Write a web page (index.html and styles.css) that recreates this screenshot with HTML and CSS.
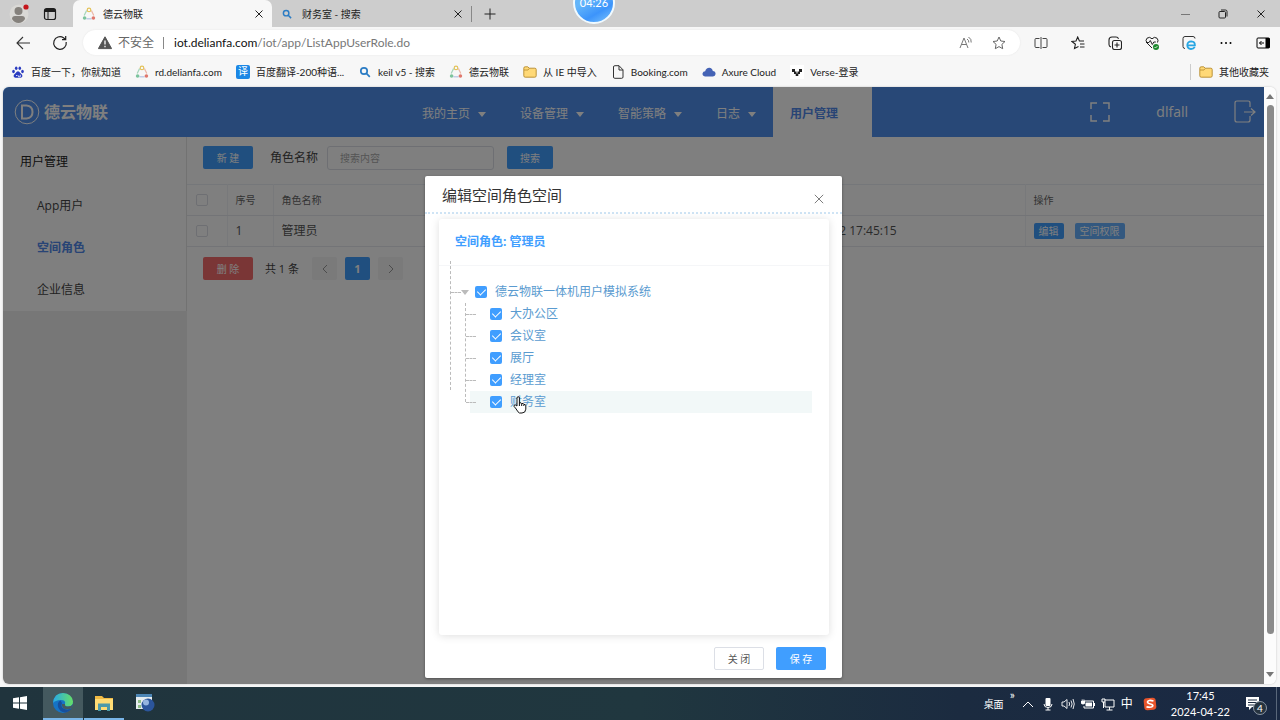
FILE: index.html
```html
<!DOCTYPE html>
<html lang="zh-CN">
<head>
<meta charset="utf-8">
<title>德云物联</title>
<link rel="stylesheet" href="styles.css">
</head>
<body>
<svg class="defs" aria-hidden="true">
  <symbol id="ring" viewBox="0 0 14 14"><g fill="none" stroke-width="1.2"><path d="M4.600 3.600 2.200 8.400" stroke="#a3d4b8"/><path d="M9.400 3.600l2.400 4.800" stroke="#ecb5a6"/><path d="M4.400 11.800h5.200" stroke="#b4c3e3"/><circle cx="7" cy="2.900" r="1.800" stroke="#e3c35c"/></g><circle cx="2.600" cy="11" r="1.800" fill="#7cc49d"/><circle cx="11.400" cy="11" r="1.800" fill="#e0776c"/></symbol>
  <symbol id="search" viewBox="0 0 14 14"><g fill="none" stroke="#2b7cc4" stroke-width="1.7"><circle cx="6" cy="6" r="3.2"/><path d="m8.4 8.4 3.4 3.4"/></g></symbol>
  <symbol id="folder" viewBox="0 0 14 14"><path d="M.8 3.2q0-1.400 1.400-1.400h2.600l1.400 1.400h5.600q1.400 0 1.400 1.300v6.300q0 1.400-1.400 1.400H2.200q-1.400 0-1.400-1.400z" fill="#ffd977" stroke="#b58a2c" stroke-width=".9"/><path d="M1 5h4l1.300-1.600" fill="none" stroke="#b58a2c" stroke-width=".8"/></symbol>
  <symbol id="close" viewBox="0 0 10 10"><path d="m1.500 1.500 7 7m0-7-7 7" fill="none" stroke="currentColor"/></symbol>
</svg>

<header class="browser">
  <div class="tabstrip">
    <button class="profile" aria-label="个人资料"><svg width="20" height="20" viewBox="0 0 20 20"><circle cx="10" cy="10" r="9.500" fill="#d9d8d5"/><circle cx="9.500" cy="7" r="4" fill="#85817c"/><path d="M3 15q0-3 3-3h7q3 0 3 3-2.500 4-6.500 4T3 15z" fill="#85817c"/><circle cx="17" cy="3" r="2.600" fill="#c5161d"/></svg></button>
    <button class="spaces" aria-label="工作区"><svg width="14" height="14" viewBox="0 0 14 14"><rect x="1.500" y="1.500" width="11" height="11" rx="2" fill="none" stroke="#1c1c1c" stroke-width="1.200"/><path d="M2 2h10v3H2z" fill="#1c1c1c"/><path d="M5 5v7" stroke="#1c1c1c"/></svg></button>
    <div class="tab active"><svg width="14" height="14"><use href="#ring"/></svg><span>德云物联</span><button aria-label="关闭标签页"><svg width="10" height="10"><use href="#close"/></svg></button></div>
    <div class="tab"><svg width="12" height="12"><use href="#search"/></svg><span>财务室 - 搜索</span><button aria-label="关闭标签页"><svg width="10" height="10"><use href="#close"/></svg></button></div>
    <button class="newtab" aria-label="新建标签页"><svg width="12" height="12" viewBox="0 0 12 12"><path d="M6 .5v11M.5 6h11" stroke="#222"/></svg></button>
    <div class="wincontrols">
      <button aria-label="最小化"><svg width="10" height="10" viewBox="0 0 10 10"><path d="M1 5.500h9" stroke="#777"/></svg></button>
      <button aria-label="还原"><svg width="10" height="10" viewBox="0 0 10 10"><g fill="none" stroke="#222"><rect x="1" y="2.500" width="6.500" height="6.500" rx="1"/><path d="M3 1h4.500Q9 1 9 2.500v5"/></g></svg></button>
      <button aria-label="关闭"><svg width="10" height="10"><use href="#close"/></svg></button>
    </div>
    <div class="timer">04:26</div>
  </div>

  <div class="toolbar">
    <button class="navbtn" aria-label="后退"><svg width="16" height="14" viewBox="0 0 16 14"><path d="M8 1 2 7l6 6M2 7h13" fill="none" stroke="#333" stroke-width="1.100"/></svg></button>
    <button class="navbtn" aria-label="刷新"><svg width="16" height="16" viewBox="0 0 16 16"><path d="M14.200 7A6.300 6.300 0 1 1 11.500 2.800L13.500 4.500M13.700 1v3.700h-3.700" fill="none" stroke="#222" stroke-width="1.200"/></svg></button>
    <div class="address">
      <svg width="14" height="14" viewBox="0 0 14 14"><path d="M7 .8 13.600 12.600H.4z" fill="#555" stroke="#555" stroke-linejoin="round"/><path d="M7 4.500v4M7 9.800v1.400" stroke="#fff" stroke-width="1.300"/></svg>
      <span class="insecure">不安全</span><i></i>
      <span class="url"><b>iot.delianfa.com</b>/iot/app/ListAppUserRole.do</span>
      <button aria-label="朗读"><svg width="14" height="14" viewBox="0 0 14 14"><g fill="none" stroke="#777"><path d="m1 12 4-10 4 10M2.500 8.500h5M8 3q2 1 1.800 3.500M9.500 1q3.200 2 2.700 5.500"/></g></svg></button>
      <button aria-label="收藏"><svg width="14" height="14" viewBox="0 0 14 14"><path d="m7 1 1.800 4 4.200.5-3.100 2.900.8 4.300L7 10.600l-3.700 2.100.8-4.300L1 5.500 5.200 5z" fill="none" stroke="#666"/></svg></button>
    </div>
    <div class="tools">
      <button aria-label="拆分屏幕"><svg width="14" height="14" viewBox="0 0 14 14"><g fill="none" stroke="#444"><path d="M5.500 2.500H2q-1 0-1 1v7q0 1 1 1h3.500M8.500 2.500H12q1 0 1 1v7q0 1-1 1H8.500M7 1v12"/></g></svg></button>
      <button aria-label="收藏夹"><svg width="14" height="14" viewBox="0 0 14 14"><path d="m7.500 10.500-4 2 .9-4.200L1 5.500 5 5l1.700-4 1.700 4H13M9 8h4.500M9 11h4.500" fill="none" stroke="#222" stroke-width="1.100"/></svg></button>
      <button aria-label="集锦"><svg width="14" height="14" viewBox="0 0 14 14"><g fill="none" stroke="#222" stroke-width="1.100"><rect x="4.500" y="4.500" width="9" height="9" rx="2"/><path d="M9 6.500v5M6.500 9h5M3 11Q1 10.500 1 8.500V4q0-3 3-3h4q2 0 2.500 1.800"/></g></svg></button>
      <button aria-label="浏览器健康"><svg width="14" height="14" viewBox="0 0 14 14"><path d="M7 12 2 7Q0 4.200 2 2.200 4.700.2 7 2.800 9.300.2 12 2.200q1.800 2 .5 4.300M1 6.500h3l1.300-2 2 4L8.800 6h2" fill="none" stroke="#222"/><circle cx="11" cy="11" r="3" fill="#1d8a2e"/><path d="m9.500 11 1 1 2-2" fill="none" stroke="#fff" stroke-width=".8"/></svg></button>
      <button aria-label="IE 模式"><svg width="14" height="14" viewBox="0 0 14 14"><path d="M3 12.500Q1 12.500 1 10.500v-8q0-2 2-2h8q2 0 2 2" fill="none" stroke="#333"/><path d="M12.800 11q-1.300 2-3.800 2-3.700-.3-3.700-4 .3-3.700 4-3.700 3.700.2 3.600 4H5.800" fill="none" stroke="#27a6e3" stroke-width="1.800"/></svg></button>
      <button aria-label="更多"><svg width="14" height="14" viewBox="0 0 14 14"><circle cx="2.500" cy="7" r="1"/><circle cx="7" cy="7" r="1"/><circle cx="11.500" cy="7" r="1"/></svg></button>
      <button aria-label="侧边栏"><svg width="14" height="14" viewBox="0 0 14 14"><rect x="1" y="2" width="12.500" height="10" rx="1" fill="none" stroke="#000"/><path d="M9.500 2h4v10h-4z"/><path d="M8 7H3.500m2-2-2 2 2 2" fill="none" stroke="#000"/></svg></button>
    </div>
  </div>

  <nav class="bookmarks">
    <a href="#"><svg width="14" height="14" viewBox="0 0 14 14" fill="#2b3cc0"><ellipse cx="2.500" cy="6.500" rx="1.300" ry="1.700"/><ellipse cx="5.200" cy="3.300" rx="1.300" ry="1.800"/><ellipse cx="8.800" cy="3.300" rx="1.300" ry="1.800"/><ellipse cx="11.500" cy="6.500" rx="1.300" ry="1.700"/><path d="M7 6.200q1.300 0 2.300 1.700l1.800 1.900q.9 2.500-1.300 2.900H4.200q-2.200-.4-1.300-2.900l1.800-1.900Q5.700 6.200 7 6.200z"/><path d="M5 10.500h1.500m1 0v1.300h1.800v-2" fill="none" stroke="#fff" stroke-width=".8"/></svg>百度一下，你就知道</a>
    <a href="#"><svg width="14" height="14"><use href="#ring"/></svg>rd.delianfa.com</a>
    <a href="#"><span class="yi">译</span>百度翻译-200种语...</a>
    <a href="#"><svg width="14" height="14"><use href="#search"/></svg>keil v5 - 搜索</a>
    <a href="#"><svg width="14" height="14"><use href="#ring"/></svg>德云物联</a>
    <a href="#"><svg width="14" height="14"><use href="#folder"/></svg>从 IE 中导入</a>
    <a href="#"><svg width="14" height="14" viewBox="0 0 14 14"><path d="M2.500 2q0-1.300 1.300-1.300H8L12 4.800V12q0 1.300-1.300 1.300H3.800Q2.500 13.300 2.500 12zM8 .8V5h4" fill="none" stroke="#333"/></svg>Booking.com</a>
    <a href="#"><svg width="14" height="14" viewBox="0 0 14 14"><path d="M3 11.500Q.3 11 .5 8.600 1 6.300 3.200 6.300 4 2.800 7.300 2.800q3 .3 3.500 3.200 2.700.3 2.800 2.900-.3 2.300-2.600 2.600z" fill="#4563b5"/></svg>Axure Cloud</a>
    <a href="#"><svg width="14" height="14" viewBox="0 0 14 14"><path d="M0 0h14v14H0z" fill="#fff"/><path d="M2 4h3v3H2zM9 4h3v3H9zM4 6.500h2.500V9H4zM7.500 6.500H10V9H7.500zM5.700 8.500h2.600V11H5.700z" fill="#222"/></svg>Verse-登录</a>
    <a class="others" href="#"><svg width="14" height="14"><use href="#folder"/></svg>其他收藏夹</a>
  </nav>
</header>

<div class="viewport">
  <div class="page">
    <header class="sitehead">
      <a class="brand" href="#"><svg width="26" height="26" viewBox="0 0 26 26" fill="none" stroke="#fff"><circle cx="13" cy="13" r="11.800"/><path d="M8 6.500h4.500q6 .5 6 6.500t-6 6.500H8z" stroke-width="2"/></svg><span>德云物联</span></a>
      <nav class="mainnav">
        <a href="#">我的主页<i></i></a><a href="#">设备管理<i></i></a><a href="#">智能策略<i></i></a><a href="#">日志<i></i></a><a class="current" href="#">用户管理</a>
      </nav>
      <div class="account">
        <button aria-label="全屏"><svg width="20" height="20" viewBox="0 0 20 20"><path d="M1 7V1h6m6 0h6v6m0 6v6h-6m-6 0H1v-6" fill="none" stroke="#fff" stroke-width="1.500"/></svg></button>
        <span>dlfall</span>
        <button aria-label="退出"><svg width="22" height="24" viewBox="0 0 22 24"><path d="M16 7V3q0-2-2-2H3Q1 1 1 3v17q0 2 2 2h11q2 0 2-2v-4M10 12h11m-4-3.500 4 3.500-4 3.500" fill="none" stroke="#fff" stroke-width="1.200"/></svg></button>
      </div>
    </header>

    <div class="content">
      <aside class="side">
        <nav>
          <h2>用户管理</h2>
          <a href="#">App用户</a><a class="current" href="#">空间角色</a><a href="#">企业信息</a>
        </nav>
      </aside>
      <main>
        <form class="filter">
          <button type="button" class="btn primary">新 建</button>
          <label for="role">角色名称</label>
          <input id="role" type="text" placeholder="搜索内容">
          <button type="button" class="btn primary find">搜索</button>
        </form>
        <table>
          <colgroup><col class="c-check"><col class="c-no"><col class="c-name"><col class="c-time"><col class="c-act"></colgroup>
          <thead><tr><th><input type="checkbox" aria-label="全选"></th><th>序号</th><th>角色名称</th><th></th><th>操作</th></tr></thead>
          <tbody><tr><td><input type="checkbox" aria-label="选择管理员"></td><td>1</td><td>管理员</td><td>2024-04-22 17:45:15</td><td><button class="mini">编辑</button><button class="mini light">空间权限</button></td></tr></tbody>
        </table>
        <div class="pager">
          <button class="btn danger">删 除</button>
          <span>共 1 条</span>
          <button class="pg" aria-label="上一页"><svg width="8" height="10" viewBox="0 0 8 10"><path d="M6 1 2 5l4 4" fill="none" stroke="#999"/></svg></button>
          <button class="pg on">1</button>
          <button class="pg" aria-label="下一页"><svg width="8" height="10" viewBox="0 0 8 10"><path d="m2 1 4 4-4 4" fill="none" stroke="#999"/></svg></button>
        </div>
      </main>
    </div>

    <div class="mask">
      <section class="dialog" role="dialog" aria-labelledby="dlg">
        <header><h1 id="dlg">编辑空间角色空间</h1><button aria-label="关闭"><svg width="12" height="12" viewBox="0 0 10 10"><path d="m1.500 1.500 7 7m0-7-7 7" fill="none" stroke="currentColor" stroke-width=".8"/></svg></button></header>
        <div class="card">
          <h3>空间角色: 管理员</h3>
          <div class="tree">
            <div class="node root"><i class="arrow"></i><label><input type="checkbox" checked>德云物联一体机用户模拟系统</label></div>
            <ul>
              <li class="node"><label><input type="checkbox" checked>大办公区</label></li>
              <li class="node"><label><input type="checkbox" checked>会议室</label></li>
              <li class="node"><label><input type="checkbox" checked>展厅</label></li>
              <li class="node"><label><input type="checkbox" checked>经理室</label></li>
              <li class="node hover"><label><input type="checkbox" checked>财务室</label>
                <svg class="cursor" width="14" height="18" viewBox="0 0 14 18"><path d="M4 10V2q0-1.300 1.200-1.300T6.400 2v5q2-.8 2.300.6 1.900-.7 2.100.8 1.900-.2 2 1.300v3.500q-.3 3.800-3.800 3.800H6.500Q5 16.500 3.200 13L1 10.300Q.8 8.500 2.500 9z" fill="#fff" stroke="#111"/><path d="M6.400 7v3M8.700 7.600V10M10.800 8.600V10" stroke="#111"/></svg>
              </li>
            </ul>
          </div>
        </div>
        <footer><button class="btn plain">关 闭</button><button class="btn save">保 存</button></footer>
      </section>
    </div>
  </div>
  <div class="scroll"><i class="up"></i><b></b><i class="down"></i></div>
</div>

<footer class="taskbar">
  <button aria-label="开始"><svg width="16" height="16" viewBox="0 0 16 16"><path d="M1 3.300 7 2.300V7.600H1zM8 2.200 15 1v6.600H8zM1 8.500h6v5.300l-6-1zM8 8.500h7V15l-7-1.200z" fill="#fff"/></svg></button>
  <button class="open focus" aria-label="Microsoft Edge"><svg width="22" height="22" viewBox="0 0 22 22"><defs><linearGradient id="eg" x1="0" x2="1"><stop offset="0" stop-color="#28a9e8"/><stop offset="1" stop-color="#66df66"/></linearGradient></defs><circle cx="11" cy="11" r="10" fill="#1673c5"/><path d="M1 11Q2 1 11 1q9 .5 10 8.500 0 5-5 5-4 0-3-2.500 1-4-4-4-6 .3-8 3z" fill="url(#eg)"/><path d="M8.500 8.500Q5 10 6 15q2 5 7 5.500 4-.5 6.500-4-4 2-7 .5-4.500-2-2.500-6z" fill="#174f9c"/><path d="M13 12q-.5 2.500 3 2.600 3.500 0 4.900-2.600-.3 3-1.500 4.300-3.400 1.700-6.400.7-3.500-1.500-3-5z" fill="#44595f"/></svg></button>
  <button class="open" aria-label="文件资源管理器"><svg width="20" height="18" viewBox="0 0 20 18"><path d="M1 2h7l2 2h9v12H1z" fill="#f1bb45"/><path d="M1 5h18v11H1z" fill="#ffdc75"/><path d="M4 17V9.500h12V17h-3v-4H7v4z" fill="#4d9aaa"/></svg></button>
  <button aria-label="管理程序"><svg width="20" height="20" viewBox="0 0 20 20"><path d="M1 1h16v15H1z" fill="#e6edf0"/><path d="M1 1h16v3H1z" fill="#4d86b5"/><path d="M3 7h3v3H3zm0 5h3v3H3z" fill="#8fbf88"/><circle cx="13" cy="12" r="6.500" fill="#2b559b"/><circle cx="11" cy="9.500" r="3" fill="#94b4df"/></svg></button>
  <div class="tray">
    <span class="desk">桌面</span><span class="more">»</span>
    <svg width="14" height="14" viewBox="0 0 14 14"><path d="m2 10 5-5 5 5" fill="none" stroke="#fff"/></svg>
    <svg width="14" height="14" viewBox="0 0 14 14"><rect x="4.500" y="1" width="5" height="8" rx="1" fill="#fff"/><path d="M3 7q0 3.500 4 3.500T11 7M7 10v3M4.500 13h5" fill="none" stroke="#fff"/></svg>
    <svg width="14" height="14" viewBox="0 0 14 14"><path d="M1 5h2l3-2.500v9L3 9H1zM8 5q1.200 2 0 4M10 3.500q2.200 3.500 0 7M12 2q2.500 5 0 10" fill="none" stroke="#fff" stroke-width=".9"/></svg>
    <svg width="14" height="14" viewBox="0 0 14 14"><path d="M3 5.500V4h9.500v7H3V9" fill="none" stroke="#fff"/><path d="M4.500 5.500H11v4H4.500zM13 6h1v3h-1zM0 4h4v2.500q-2 2-4 0zM.7 2.500h1V4h-1zM2.400 2.500h1V4h-1z" fill="#fff"/></svg>
    <svg width="14" height="14" viewBox="0 0 14 14"><path d="M3.500 3H13v7H4V5M8.500 10v3M5.500 13h6M1 2h3v3H1zM2.500 5v6" fill="none" stroke="#fff"/></svg>
    <span class="ime">中</span>
    <svg class="sogou" width="14" height="14" viewBox="0 0 14 14"><rect x="1" y="1" width="12" height="12" rx="3" fill="#e8542b" transform="rotate(-6 7 7)"/><path d="M10.500 4Q5 2.500 4.500 5q.2 1.500 3 2 2.500.5 2.300 2-.8 2-6.300.8" fill="none" stroke="#fff" stroke-width="1.700"/></svg>
    <time><span>17:45</span><span>2024-04-22</span></time>
    <button class="notice" aria-label="通知"><svg width="18" height="16" viewBox="0 0 18 16"><path d="M1 1h13v10H7l-3 3v-3H1z" fill="#fff"/><path d="M3 4h9M3 6.500h9M3 9h6" stroke="#1b2a40"/></svg><em>4</em></button>
  </div>
</footer>
</body>
</html>
```
FILE: styles.css
```css
* { box-sizing: border-box; }
body {
  margin: 0;
  height: 100vh;
  display: flex;
  flex-direction: column;
  overflow: hidden;
  background: #f7f7f7;
  color: #222;
  font: 12px/16px "Open Sans", "Noto Sans CJK SC", sans-serif;
}
.defs { position: absolute; width: 0; height: 0; }
svg { display: block; flex: none; }
button { margin: 0; padding: 0; border: 0; background: none; color: inherit; font: inherit; display: flex; align-items: center; justify-content: center; }
a { color: inherit; text-decoration: none; }
h1, h2, h3, ul { margin: 0; padding: 0; list-style: none; font-weight: 400; }

/* browser chrome */
.browser { font-family: Lato, "Noto Sans CJK SC", sans-serif; }
.tabstrip { position: relative; display: flex; align-items: center; height: 27px; background: #cdcdcd; font-size: 10px; }
.profile { width: 20px; margin-left: 9px; }
.spaces { width: 14px; margin: 0 16px 0 14px; }
.tab { display: flex; align-items: center; gap: 9px; width: 199px; height: 27px; padding: 0 8px 0 9px; }
.tab.active { gap: 7px; background: #f7f7f7; border-radius: 7px 7px 0 0; }
.tab span { flex: 1; }
.newtab { height: 16px; padding: 0 12px; border-left: 1px solid #888; }
.wincontrols { display: flex; gap: 28px; margin-left: auto; padding-right: 14px; }
.timer {
  position: absolute; left: 573px; top: -18px; width: 42px; height: 42px;
  border: 2px solid #f0faff; border-radius: 50%;
  background: linear-gradient(150deg, #63b5fa 40%, #3c94fb 70%, #7cc4fc);
  color: #fff; font-size: 11px; line-height: 38px; text-align: center;
}
.toolbar { display: flex; align-items: center; height: 31px; padding-right: 10px; }
.navbtn { width: 16px; margin-left: 15px; }
.navbtn + .navbtn { margin: 0 15px 0 21px; }
.address { flex: 1; display: flex; align-items: center; height: 25px; padding: 0 14px 0 15px; border-radius: 13px; background: #fff; box-shadow: 0 0 2px #e4e4e4; color: #777; }
.insecure { margin: 0 9px 0 6px; color: #666; }
.address i { width: 1px; height: 12px; margin-right: 10px; background: #888; }
.url { flex: 1; }
.url b { color: #111; font-weight: 400; }
.address button + button { margin-left: 19px; }
.tools { display: flex; gap: 23px; margin-left: 14px; }
.bookmarks { display: flex; align-items: center; gap: 14px; height: 28px; padding: 0 11px; font-size: 10px; white-space: nowrap; }
.bookmarks a { display: flex; align-items: center; gap: 6px; }
.bookmarks .others { margin-left: auto; padding-left: 8px; border-left: 1px solid #ccc; }
.yi { width: 14px; height: 14px; border-radius: 2px; background: #1c87e5; color: #fff; font-size: 10px; line-height: 13px; text-align: center; }

/* page area */
.viewport { flex: 1; display: flex; min-height: 0; margin: 1px 4px 3px 3px; border-radius: 6px; overflow: hidden; background: #fff; box-shadow: 0 0 2px #bbb; }
.page { position: relative; flex: 1; display: flex; flex-direction: column; min-width: 0; background: #fff; }
.scroll { display: flex; flex-direction: column; align-items: center; width: 12px; padding: 7px 0; background: #fcfcfc; }
.scroll b { width: 7px; flex: 1; margin: 6px 0 38px; border-radius: 4px; background: #8b8b8b; }
.scroll i { border: 4px solid transparent; }
.scroll .up { border-top: 0; border-bottom: 5px solid #777; }
.scroll .down { border-bottom: 0; border-top: 5px solid #777; }

.sitehead { display: flex; flex: none; height: 50px; background: #5091ee; color: #fff; }
.brand { display: flex; align-items: center; gap: 4px; width: 402px; padding-left: 11px; }
.brand span { font-size: 16px; font-weight: 700; line-height: 24px; }
.mainnav { display: flex; }
.mainnav a { display: flex; align-items: center; gap: 8px; padding: 4px 17px 0; }
.mainnav i { border: 4px solid transparent; border-top: 5px solid #fff; border-bottom: 0; }
.mainnav .current { padding-right: 34px; background: #fff; color: #5088ea; font-weight: 700; }
.account { display: flex; align-items: center; gap: 46px; margin-left: auto; padding-right: 8px; font-size: 14px; }

.content { flex: 1; display: flex; min-height: 0; color: #444; }
.side { width: 184px; flex: none; background: #efefef; }
.side nav { display: flex; flex-direction: column; background: #fff; border-right: 1px solid #e4e4e4; }
.side h2 { padding: 17px 17px 15px; color: #222; font-size: 12px; line-height: 16px; }
.side a { padding: 13px 34px; line-height: 16px; }
.side .current { color: #5088ea; font-weight: 700; }
main { flex: 1; min-width: 0; }
.filter { display: flex; align-items: center; height: 47px; padding: 0 16px 6px; }
.btn { width: 50px; height: 23px; border-radius: 2px; color: #fff; font-size: 10px; }
.primary { background: #409eff; }
.find { width: 46px; }
.danger { background: #f56c6c; }
.filter label { margin: 0 9px 0 17px; }
.filter input { width: 167px; height: 24px; margin-right: 13px; padding: 0 12px; border: 1px solid #dcdfe6; border-radius: 3px; background: #fff; font: inherit; font-size: 10px; }
.filter input::placeholder { color: #aaa; }
table { width: 100%; table-layout: fixed; border-collapse: collapse; border-top: 1px solid #ebeef5; border-bottom: 1px solid #d5e3e6; }
.c-check { width: 40px; }
.c-no { width: 46px; }
.c-name { width: 502px; }
.c-time { width: 250px; }
th, td { height: 31px; padding: 0 8px; border-bottom: 1px solid #e6e9ee; border-right: 1px solid #f0f2f6; text-align: left; color: #555; }
th { color: #666; font-size: 10px; font-weight: 400; }
th:last-child, td:last-child { border-right: 0; }
table input { appearance: none; display: block; width: 12px; height: 12px; margin: 0 0 0 1px; border: 1px solid #dcdfe6; border-radius: 2px; }
.mini { display: inline-block; height: 16px; padding: 0 5px; border-radius: 2px; background: #409eff; color: #fff; font-size: 10px; line-height: 16px; vertical-align: middle; }
.mini + .mini { margin-left: 11px; }
.light { background: #66b1ff; }
.pager { display: flex; align-items: center; padding: 10px 16px; font-size: 11px; }
.pager span { margin: 0 13px 0 12px; }
.pg { width: 25px; height: 23px; margin-right: 8px; border-radius: 2px; background: #f4f4f5; font-weight: 700; }
.pg.on { background: #409eff; color: #fff; }

/* dialog */
.mask { position: absolute; inset: 0; display: flex; justify-content: center; padding: 89px 0 6px; background: rgba(0, 0, 0, .5); }
.dialog { display: flex; flex-direction: column; width: 417px; border-radius: 2px; background: #fff; box-shadow: 0 1px 3px rgba(0, 0, 0, .4); }
.dialog > header { display: flex; justify-content: space-between; height: 38px; padding: 9px 17px 0; border-bottom: 2px dotted #cfe4f5; }
.dialog h1 { color: #333; font-size: 15px; line-height: 20px; }
.dialog header button { height: 16px; margin-top: 6px; color: #777; }
.card { flex: 1; margin: 5px 13px 0 14px; border-radius: 3px; box-shadow: 0 1px 8px rgba(0, 0, 0, .13); }
.card h3 { padding: 15px 16px; border-bottom: 1px solid #f5f6f8; color: #409eff; font-size: 12px; font-weight: 700; line-height: 16px; }
.tree { position: relative; padding: 15px 17px 0 12px; color: #5a9bd0; }
.tree::before { content: ""; position: absolute; left: 11px; top: -5px; height: 129px; border-left: 1px dashed #bbb; }
.node { display: flex; align-items: center; height: 22px; }
.node label { display: flex; align-items: center; gap: 8px; }
.node::before { content: ""; width: 10px; border-top: 1px dashed #bbb; }
.arrow { margin-right: 6px; border: 4px solid transparent; border-top: 5px solid #bbb; border-bottom: 0; }
.tree ul { position: relative; margin-left: 15px; }
.tree ul::before { content: ""; position: absolute; left: -1px; top: 0; height: 99px; border-left: 1px dashed #bbb; }
.tree li::before { margin-right: 14px; }
.hover { position: relative; background: linear-gradient(90deg, transparent 4px, #f2f8f8 4px); }
.tree input { appearance: none; display: flex; justify-content: center; width: 12px; height: 12px; margin: 0; border-radius: 2px; background: #409eff; }
.tree input::after { content: ""; width: 4px; height: 7px; margin-top: 1px; border: solid #fff; border-width: 0 1px 1px 0; transform: rotate(45deg); }
.cursor { position: absolute; left: 47px; top: 5px; }
.dialog footer { display: flex; justify-content: flex-end; gap: 12px; padding: 12px 16px 8px; }
.plain { border: 1px solid #dcdfe6; color: #555; }
.save { background: #409eff; }

/* taskbar */
.taskbar { display: flex; flex: none; height: 33px; background: linear-gradient(90deg, #20343d, #20373f 50%, #1b2b40 75%, #1a2943); color: #fff; font-family: Lato, "Noto Sans CJK SC", sans-serif; }
.taskbar > button { width: 40px; height: 33px; margin-right: 1px; border-bottom: 2px solid transparent; }
.taskbar > button:first-child { margin-right: 3px; }
.taskbar > .open { border-bottom-color: #79b5e8; }
.taskbar > .focus { background: #44595f; }
.tray { display: flex; align-items: center; gap: 6px; margin-left: auto; margin-right: 3px; padding-right: 12px; border-right: 1px solid #59677a; }
.desk { font-size: 10px; }
.more { align-self: flex-start; }
.ime { width: 12px; }
.sogou { margin: 0 8px 0 4px; }
time { display: flex; flex-direction: column; align-items: center; font-size: 11px; }
.notice { position: relative; width: 20px; margin-left: 8px; }
.notice em { position: absolute; left: 9px; top: 5px; width: 14px; height: 14px; border-radius: 50%; border: 1px solid #8c97a5; background: #26333f; font-size: 10px; font-style: normal; line-height: 12px; }
```
